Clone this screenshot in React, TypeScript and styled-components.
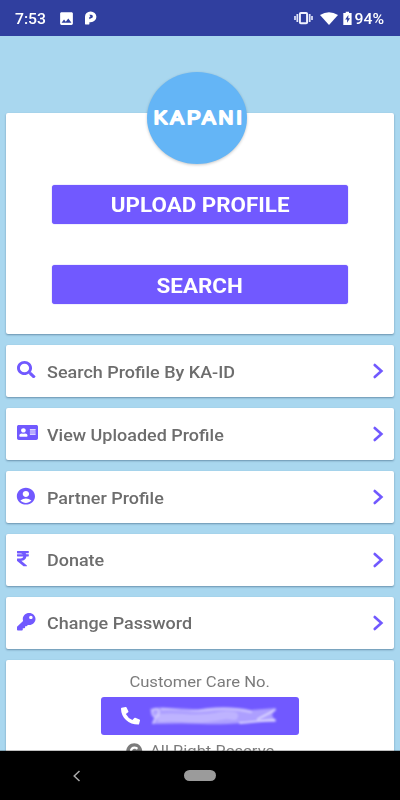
import React from "react";
import styled, { createGlobalStyle } from "styled-components";
import { FaSearch, FaAddressCard, FaRupeeSign, FaKey, FaCopyright, FaPhoneAlt } from "react-icons/fa";
import { MdAccountCircle, MdImage } from "react-icons/md";

const PURPLE = "#7159ff";

const GlobalStyle = createGlobalStyle`
  * { box-sizing: border-box; }
  body { margin: 0; background: #a9d7ef; font-family: Roboto, sans-serif; }
  svg { display: block; flex: none; }
`;

const Screen = styled.div`
  width: 400px;
  height: 800px;
  display: flex;
  flex-direction: column;
  overflow: hidden;
  background: #a9d7ef;
`;

const StatusBar = styled.header`
  height: 36px;
  flex: none;
  display: flex;
  align-items: center;
  justify-content: space-between;
  padding: 0 16px 0 15px;
  background: #303f9f;
  color: #fff;
`;

const StatusGroup = styled.div`
  display: flex;
  align-items: center;
`;

const Wide = styled.span<{ $x?: number; $origin?: string }>`
  display: inline-block;
  white-space: nowrap;
  transform: scaleX(${(p) => p.$x ?? 1.087});
  transform-origin: ${(p) => p.$origin ?? "center"} center;
`;

const StatusText = styled.span<{ $width?: number; $before?: number }>`
  width: ${(p) => (p.$width ? `${p.$width}px` : "auto")};
  margin-left: ${(p) => p.$before ?? 0}px;
  font-size: 15px;
  font-weight: 500;
  line-height: 18px;
  padding-top: 1px;
`;

const StatusIcon = styled.svg<{ $gap?: number }>`
  margin-left: ${(p) => p.$gap ?? 0}px;
`;

const Content = styled.main`
  flex: 1;
  min-height: 0;
  overflow: hidden;
  padding: 77px 6px 0;
  display: flex;
  flex-direction: column;
  gap: 10.3px;
`;

const Card = styled.section`
  flex: none;
  border-radius: 2px;
  background: #fff;
  box-shadow: 0 1px 2px rgba(20, 50, 80, 0.42);
`;

const HeroCard = styled(Card)`
  position: relative;
  height: 221.4px;
  padding: 72px 46px 0;
  display: flex;
  flex-direction: column;
  gap: 41.5px;
`;

const Logo = styled.div`
  position: absolute;
  top: -41px;
  left: 141.3px;
  width: 100px;
  height: 92px;
  border-radius: 50%;
  background: #64b5f6;
  box-shadow: 0 1px 3px rgba(0, 0, 0, 0.22);
`;

const ActionButton = styled.button`
  height: 38.7px;
  padding: 2px 0 0;
  border: 0;
  border-radius: 3px;
  background: ${PURPLE};
  box-shadow: 0 0 1px ${PURPLE};
  color: #fff;
  font: 700 20.6px/24px Roboto, sans-serif;
`;

const Row = styled(Card)`
  height: 52.7px;
  padding: 0 10px 0 11px;
  display: flex;
  align-items: center;
  color: ${PURPLE};
`;

const RowIcon = styled.span<{ $w: number; $h: number; $shift?: number }>`
  width: 30px;
  flex: none;
  padding-bottom: 2.4px;
  svg {
    width: ${(p) => p.$w}px;
    height: ${(p) => p.$h}px;
    margin-left: ${(p) => p.$shift ?? 0}px;
  }
`;

const RowLabel = styled.span`
  flex: 1;
  padding-top: 3px;
  color: #6d6d6d;
  font-size: 16.55px;
  font-weight: 500;
  line-height: 20px;
`;

const SupportCard = styled(Card)`
  height: 110px;
  padding-top: 12px;
  display: flex;
  flex-direction: column;
  align-items: center;
  color: #7b7b7b;
  font-size: 15.3px;
  line-height: 20px;
`;

const CallButton = styled.button`
  width: 198px;
  height: 38.7px;
  margin-top: 5px;
  padding: 0 0 0 20px;
  display: flex;
  align-items: center;
  gap: 7px;
  border: 0;
  border-radius: 3px;
  background: ${PURPLE};
  color: #fff;
`;

const PhoneIcon = styled(FaPhoneAlt)`
  width: 19px;
  height: 17.6px;
`;

const Copyright = styled.div`
  display: flex;
  align-items: center;
  gap: 7px;
  margin-top: 6px;
  padding-right: 10px;
`;

const NavBar = styled.nav`
  height: 49px;
  flex: none;
  padding-left: 72px;
  display: flex;
  align-items: center;
  background: #000;
  box-shadow: 0 -1px 0 rgba(0, 0, 0, 0.25);
`;

const HomePill = styled.span`
  width: 31.5px;
  height: 11px;
  margin-left: 103px;
  border-radius: 6px;
  background: #9b9b9b;
`;

const rows = [
  { label: "Search Profile By KA-ID", Icon: FaSearch, w: 18.5, h: 17.3 },
  { label: "View Uploaded Profile", Icon: FaAddressCard, w: 21, h: 17 },
  { label: "Partner Profile", Icon: MdAccountCircle, w: 21.8, h: 20.3, shift: -1.9 },
  { label: "Donate", Icon: FaRupeeSign, w: 11.8, h: 17.3 },
  { label: "Change Password", Icon: FaKey, w: 18.5, h: 17.5 },
];

const Chevron = () => (
  <svg width="12" height="16" viewBox="0 0 12 16" fill="none">
    <path d="M2.7 2L9.4 8L2.7 14" stroke={PURPLE} strokeWidth="2.6" strokeLinecap="round" />
  </svg>
);

const SmudgedNumber = () => (
  <svg width="132" height="22" viewBox="0 0 132 22" fill="none">
    <defs>
      <filter id="soft" x="-10%" y="-30%" width="120%" height="160%">
        <feGaussianBlur stdDeviation="1" />
      </filter>
    </defs>
    <g filter="url(#soft)" stroke="#fff" strokeLinecap="round">
      <path
        d="M3 4Q12 1 28 4T60 3Q85 1 104 5L129 3L125 10L129 17Q108 16 96 18Q72 20 55 19T5 19L7 13Z"
        fill="#fff"
        fillOpacity=".42"
        stroke="none"
      />
      <path d="M6 11C1 4 12 1 12 7S5 13 5 8M11 9L6 18" strokeOpacity=".4" strokeWidth="2" />
      <path d="M15 4C34 3 45 7 60 5S88 3 104 7" strokeOpacity=".35" strokeWidth="2.4" />
      <path d="M14 13C33 11 39 15 60 13S72 9 87 11" strokeOpacity=".22" strokeWidth="8" />
      <path d="M93 18C104 18 115 15 128 15M111 14L128 5" strokeOpacity=".65" strokeWidth="1.8" />
    </g>
  </svg>
);

export default function App() {
  return (
    <Screen>
      <GlobalStyle />
      <StatusBar>
        <StatusGroup>
          <StatusText $width={43}><Wide $x={1.05} $origin="left">7:53</Wide></StatusText>
          <MdImage size={17} />
          <StatusIcon $gap={10} width="12" height="14" viewBox="0 0 12 14">
            <path d="M0 13V6A5.7 5.4 0 1 1 5.7 11.2H4.4V13Q4.4 13.4 3.9 13.4H.4Z" fill="#fff" />
            <path d="M4.3 3.8H6.2Q7.9 4 7.9 5.6Q7.8 7.2 6.1 7.3L4.3 8.3V6L5.5 5.4Z" fill="#303f9f" />
          </StatusIcon>
        </StatusGroup>
        <StatusGroup>
          <StatusIcon width="19" height="14" viewBox="0 0 19 14">
            <path d="M1 5V9M3.3 3V11M15.7 3V11M18 5V9" stroke="#dfe3fa" strokeWidth="1.7" />
            <rect x="5.9" y="1.9" width="7.2" height="10.4" rx="1" fill="none" stroke="#f0f2ff" strokeWidth="2" />
          </StatusIcon>
          <StatusIcon $gap={7} width="18" height="13" viewBox="0 0 18 13">
            <path d="M0 3Q9-2.6 18 3L9 13Z" fill="#fff" />
          </StatusIcon>
          <StatusIcon $gap={5} width="9" height="14" viewBox="0 0 9 14">
            <path d="M2.7 .8H6V2H8.6V14H.3V2H2.7Z" fill="#fff" />
            <path d="M5.4 4L2.2 8.5H4.1V11.8L7 7.3H5.2Z" fill="#303f9f" />
          </StatusIcon>
          <StatusText $before={4}><Wide $x={1.05} $origin="right">94%</Wide></StatusText>
        </StatusGroup>
      </StatusBar>
      <Content>
        <HeroCard>
          <Logo>
            <svg width="100" height="92" viewBox="0 0 100 92">
              <text
                transform="translate(6.7 52) scale(1.09 1)"
                textLength="81"
                lengthAdjust="spacing"
                fontFamily="Liberation Sans, sans-serif"
                fontSize="18.8"
                fill="#fff"
                stroke="#fff"
                strokeWidth="1.9"
                strokeLinejoin="round"
              >
                KAPANI
              </text>
            </svg>
          </Logo>
          <ActionButton><Wide>UPLOAD PROFILE</Wide></ActionButton>
          <ActionButton><Wide>SEARCH</Wide></ActionButton>
        </HeroCard>
        {rows.map(({ label, Icon, w, h, shift }) => (
          <Row key={label}>
            <RowIcon $w={w} $h={h} $shift={shift}><Icon preserveAspectRatio="none" /></RowIcon>
            <RowLabel><Wide $origin="left">{label}</Wide></RowLabel>
            <Chevron />
          </Row>
        ))}
        <SupportCard>
          <Wide>Customer Care No.</Wide>
          <CallButton><PhoneIcon preserveAspectRatio="none" /><SmudgedNumber /></CallButton>
          <Copyright><FaCopyright size={16.5} /><Wide $origin="left">All Right Reserve</Wide></Copyright>
        </SupportCard>
      </Content>
      <NavBar>
        <svg width="9" height="12" viewBox="0 0 9 12" fill="none">
          <path d="M7.5 1L2.2 6L7.5 11" stroke="#aaa" strokeWidth="1.5" />
        </svg>
        <HomePill />
      </NavBar>
    </Screen>
  );
}
